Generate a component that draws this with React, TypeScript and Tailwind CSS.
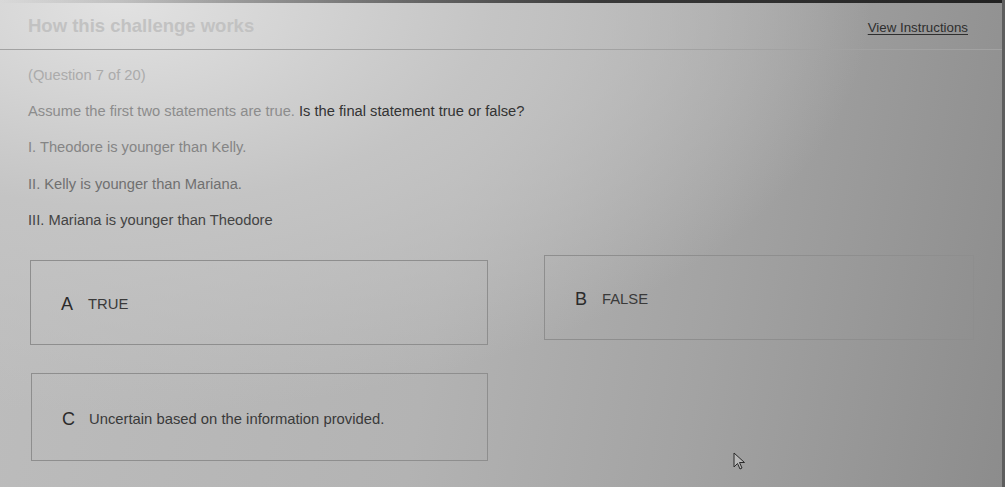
const options = [
  { key: "A", label: "TRUE" },
  { key: "B", label: "FALSE" },
  { key: "C", label: "Uncertain based on the information provided." },
];

function OptionBox({ letter, label, className }: { letter: string; label: string; className?: string }) {
  return (
    <div className={`flex h-[85px] items-center border border-[#8e8e8e] pl-[30px] ${className ?? ""}`}>
      <span className="w-[27px] pt-[3px] text-[18px] text-[#2b2b2b]">{letter}</span>
      <span className="pt-[3px] text-[14.8px] text-[#3a3a3a]">{label}</span>
    </div>
  );
}

export default function App() {
  return (
    <div
      className="relative flex h-[487px] w-[1005px] overflow-hidden bg-[radial-gradient(ellipse_at_12%_0%,#e2e2e2_0%,#c4c4c4_30%,transparent_60%),linear-gradient(100deg,#bdbdbd_0%,#b3b3b3_45%,#a3a3a3_70%,#8c8c8c_100%)]"
      style={{ fontFamily: '"Liberation Sans", Arial, sans-serif' }}
    >
      <div className="flex flex-1 flex-col">
        {/* bezel edge at the top */}
        <div className="h-[3px] bg-linear-to-r from-transparent via-[#3a3a3a] via-60% to-[#222]" />

        {/* Header */}
        <header className="flex h-[47px] items-center justify-between border-b border-[#a2a2a2] pl-[28px] pr-[34px]">
          <h1 className="text-[18.5px] font-bold text-[#c2c2c2]">How this challenge works</h1>
          <a className="pt-[3px] text-[13.3px] text-[#2e2e2e] underline underline-offset-2">View Instructions</a>
        </header>

        {/* Question */}
        <main className="flex flex-col px-[28px] pt-[15px] text-[14.7px] leading-[20px]">
          <p className="text-[#ababab]">(Question 7 of 20)</p>
          <p className="mt-[16px] text-[#8c8c8c]">
            Assume the first two statements are true.{" "}
            <span className="text-[#333]">Is the final statement true or false?</span>
          </p>
          <p className="mt-[16px] text-[#858585]">I. Theodore is younger than Kelly.</p>
          <p className="mt-[17px] text-[#707070]">II. Kelly is younger than Mariana.</p>
          <p className="mt-[16px] text-[#444]">III. Mariana is younger than Theodore</p>

          <div className="mt-[27px] flex items-start gap-[56px] pl-[2px]">
            <OptionBox letter={options[0].key} label={options[0].label} className="w-[458px] mt-[3px]" />
            <OptionBox letter={options[1].key} label={options[1].label} className="w-[430px] -mt-[2px]" />
          </div>
          <div className="mt-[28px] pl-[3px]">
            <OptionBox letter={options[2].key} label={options[2].label} className="w-[457px] h-[88px]" />
          </div>
        </main>
      </div>

      {/* dark screen edge on the right */}
      <div className="w-[8px] bg-[#5e5e5e]" />

      {/* mouse pointer */}
      <svg className="absolute left-[733px] top-[452px]" width="13" height="19" viewBox="0 0 13 19">
        <path d="M1 1 L1 15 L4.5 11.5 L7 17 L9 16 L6.5 10.5 L11.5 10.5 Z" fill="#b9b9b9" stroke="#2a2a2a" strokeWidth="1" strokeLinejoin="round" />
      </svg>
    </div>
  );
}
